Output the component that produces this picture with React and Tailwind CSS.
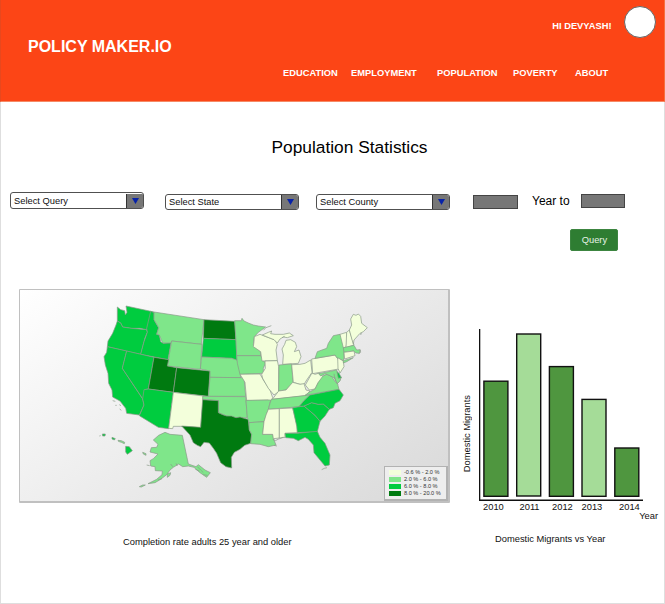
import React from "react";

const GREENS = { cream: "#f3ffdb", light: "#7fe68a", mid: "#00cc3f", dark: "#007a10" };

// Each region lists polygons drawn relative to its own origin.
const REGIONS = [
  {
    origin: "translate(0 0)",
    states: [
      ["mid", "82 36 92 44 104 47 106 60 111 52 108 33 192 51 181 72 170 104 150 100 124 100 98 96 92 84 82 78"],
      ["mid", "82 78 92 84 98 96 124 100 170 104 172 112 165 128 152 178 104 167 52 155 54 138 68 115 78 90"],
      ["mid", "182 49 192 53 192 74 206 98 200 118 208 120 212 140 220 145 243 143 234 194 152 178 162 140 172 112 170 100"],
      ["light", "192 51 342 74 334 148 245 138 243 144 218 144 208 120 200 118 206 98 192 74"],
      ["light", "245 138 336 148 331 223 232 213"],
      ["mid", "52 155 110 168 97 220 158 312 162 330 148 360 110 355 107 340 90 318 68 306 66 285 56 265 54 235 46 210 42 185 50 172"],
      ["mid", "110 168 192 187 175 282 165 284 160 314 97 220"],
      ["dark", "192 187 236 194 232 213 260 218 250 292 175 282"],
      ["dark", "260 218 360 228 355 304 250 292"],
      ["mid", "175 282 250 292 236 401 205 397 148 362 162 330 158 312 162 284"],
      ["cream", "250 292 340 303 332 398 272 394 250 394 248 401 236 400"],
      ["dark", "342 74 434 79 438 134 340 130"],
      ["mid", "340 130 438 134 441 197 425 190 335 186"],
      ["light", "335 186 425 190 441 195 450 222 452 248 360 247 360 228 331 222"],
      ["light", "360 247 462 248 467 304 355 304"],
    ],
  },
  {
    origin: "translate(330 0)",
    states: [
      ["light", "104 77 124 77 126 70 132 78 145 84 160 90 175 93 197 96 175 112 163 125 160 150 182 170 182 182 110 182 108 140"],
      ["light", "110 182 182 182 196 205 190 220 190 235 120 238 112 205"],
      ["cream", "120 238 180 237 190 255 210 285 218 308 210 325 205 315 140 317 135 262"],
      ["cream", "163 125 180 118 195 124 225 135 232 148 228 165 232 197 186 198 182 170 160 155 162 140"],
      ["cream", "187 120 205 112 215 108 212 116 225 118 250 118 268 114 280 122 262 128 250 126 240 132 232 144 222 134"],
      ["cream", "248 208 250 180 246 162 254 148 258 136 272 134 286 142 290 155 283 170 297 165 303 185 295 205"],
      ["cream", "195 198 232 197 236 215 236 270 236 290 222 300 205 280 188 250 185 238 196 220"],
      ["light", "237 210 275 207 279 262 258 285 236 288"],
      ["cream", "275 209 300 208 315 205 332 195 336 232 320 255 312 268 300 268 280 262"],
      ["cream", "217 313 236 288 258 285 278 262 300 268 312 266 318 285 330 288 318 302"],
      ["cream", "336 234 345 238 358 234 368 244 380 238 362 256 355 262 345 282 328 285 316 270"],
      ["cream", "335 192 405 180 416 195 416 222 338 236"],
      ["light", "345 190 352 170 380 160 385 145 400 122 420 118 428 135 432 160 432 185 430 197 412 190 405 180"],
      ["cream", "413 188 430 198 432 215 420 234 414 220"],
      ["cream", "420 118 440 112 442 130 438 158 430 158"],
      ["cream", "440 112 448 105 462 150 438 158"],
      ["cream", "448 105 455 90 452 72 460 58 468 61 475 57 482 64 485 85 502 98 490 110 480 115 462 135 460 148"],
      ["light", "430 158 462 151 470 165 480 164 478 175 468 174 460 168 432 172"],
      ["cream", "432 172 462 168 465 182 434 192"],
      ["light", "430 197 460 188 440 200 430 204"],
      ["light", "380 238 395 244 404 258 413 268 417 283 315 301 330 290 345 282 355 262 368 244"],
      ["light", "356 236 410 225 416 248 424 246 420 258 412 266 402 248 385 240 376 236 362 243"],
      ["mid", "411 230 417 235 424 248 415 250"],
    ],
  },
  {
    origin: "translate(330 255)",
    states: [
      ["light", "8 49 137 50 142 112 132 114 120 112 108 113 80 108 55 98 55 62 8 58"],
      ["dark", "8 59 55 62 55 98 68 104 80 108 94 108 108 113 120 111 132 115 145 118 148 150 155 163 152 190 134 196 120 208 103 217 94 232 95 264 78 260 62 248 50 220 40 205 28 189 12 187 2 200 -8 196 -20 188 -30 165 -55 138 2 142"],
      ["light", "138 61 212 60 205 88 192 125 147 128 142 112"],
      ["light", "147 128 192 125 188 163 218 163 222 180 228 195 205 200 180 193 152 191 155 163 148 150"],
      ["light", "214 58 330 45 312 62 297 80 205 88 210 70"],
      ["cream", "205 88 238 86 238 174 220 176 218 163 188 163 192 125 198 105"],
      ["cream", "238 86 278 84 292 140 292 158 255 160 255 172 238 174"],
      ["mid", "278 83 312 78 345 106 360 124 352 155 292 158 290 138"],
      ["mid", "312 78 335 68 355 73 370 72 388 88 375 108 360 124 345 106"],
      ["mid", "297 80 312 62 330 45 417 28 430 45 420 62 405 70 400 83 388 88 370 72 355 73 335 68 312 78"],
      ["mid", "255 160 292 160 352 154 360 172 375 190 390 225 388 255 375 258 360 240 342 218 340 195 325 178 315 172 295 182 280 175 257 173"],
    ],
  },
  {
    origin: "translate(0 375)",
    states: [
      ["light", "190 60 206 46 225 37 240 43 277 46 295 132 318 140 325 134 345 150 361 158 350 172 330 158 312 142 295 138 278 140 266 132 250 142 240 150 230 164 212 178 195 188 174 191 200 178 216 164 217 153 196 152 195 140 182 138 180 122 190 116 204 102 180 96 184 83 200 82 204 73"],
      ["light", "232 162 242 158 240 166 232 172"],
      ["light", "148 200 158 195 166 195 154 201"],
      ["light", "158 97 168 101 168 106 160 102"],
      ["mid", "107 79 118 80 127 92 112 103 107 96"],
      ["mid", "37 42 46 42 45 48 38 48"],
      ["mid", "66 52 76 56 73 60 66 57"],
      ["light", "84 61 94 62 104 67 103 71 94 67 85 64"],
    ],
  },
];

const LEGEND = [
  ["bg-[#f3ffdb]", "-0.6 % - 2.0 %"],
  ["bg-[#7fe68a]", "2.0 % - 6.0 %"],
  ["bg-[#00cc3f]", "6.0 % - 8.0 %"],
  ["bg-[#007a10]", "8.0 % - 20.0 %"],
];

function StateMap() {
  return (
    <svg className="block h-[211px] w-[428px]" viewBox="-210 -15 1284 633">
      <g stroke="#8a9a88" strokeOpacity="0.8" strokeWidth="2.6" strokeLinejoin="round">
        {REGIONS.map((r) => (
          <g key={r.origin} transform={r.origin}>
            {r.states.map(([tone, pts]) => (
              <polygon key={pts} points={pts} fill={GREENS[tone]} />
            ))}
          </g>
        ))}
        <g fill="none">
          <path transform="translate(330 0)" d="M190 106l8-8 16-6 M246 128l8-4" />
          <path transform="translate(330 255)" d="M218 178l8 4 10-5 6-2 8-4 M222 196l9 2 M365 269l8-4 8-2" />
          <path transform="translate(330 0)" d="M404 246l4 14 6 8 M402 236l2 12 M480 118l6-2 M476 176l6-4-1-8" />
          <path d="M68 317l8 2 M76 331h4 M88 329l5 3 M89 342l5 4" />
          <path transform="translate(0 375)" d="M28 48l4-1 M170 135l9 2 M242 132l6 8 M258 130l4 8 M316 148l12 5 M322 140l10 10 M332 150l8 8 M340 164l12 2 M204 180l12-4" />
        </g>
      </g>
    </svg>
  );
}

function Select({ label, className }) {
  return (
    <div className={`flex w-[134px] overflow-hidden rounded-[3px] border border-[#505050] bg-white ${className}`}>
      <span className="flex-1 pl-[3px] leading-[15px]">{label}</span>
      <span className="flex w-[17px] items-center justify-center border-l border-[#333] bg-[#777]">
        <svg className="h-[6px] w-[7px]" viewBox="0 0 7 6">
          <path d="M0 0h7L3.5 6z" fill="#0722a8" />
        </svg>
      </span>
    </div>
  );
}

const BARS = [
  { year: "2010", x: 4.9, y: 52.2, h: 115.1, fill: "#4f963f" },
  { year: "2011", x: 37.7, y: 5, h: 162, fill: "#a5dc98" },
  { year: "2012", x: 70.4, y: 37.6, h: 129.7, fill: "#4f963f" },
  { year: "2013", x: 103, y: 70.4, h: 96.9, fill: "#a5dc98" },
  { year: "2014", x: 135.8, y: 119, h: 48.3, fill: "#4f963f" },
];

function BarChart() {
  return (
    <div className="mt-[40px] w-[197px]">
      <div className="flex">
        <div className="flex h-[172px] w-[17px] items-center justify-start pt-[37px]">
          <span className="rotate-180 whitespace-nowrap leading-[11px] [writing-mode:vertical-rl]">Domestic Migrants</span>
        </div>
        <svg className="block h-[172px] w-[168px]" viewBox="0 0 168 172">
          <g stroke="#111" strokeWidth="1.4">
            <path d="M0.6 0V171.3H164" fill="none" />
            {BARS.map((b) => (
              <rect key={b.year} x={b.x} y={b.y} width="24" height={b.h} fill={b.fill} />
            ))}
          </g>
        </svg>
      </div>
      <div className="mt-px flex pl-[21px] leading-[11px]">
        <span className="w-[36.5px]">2010</span>
        <span className="w-[32.5px]">2011</span>
        <span className="w-[29.5px]">2012</span>
        <span className="w-[37.5px]">2013</span>
        <span>2014</span>
      </div>
      <div className="mt-[-2px] pr-px text-right leading-[11px]">Year</div>
      <div className="mt-3 pl-[33px] leading-[11px]">Domestic Migrants vs Year</div>
    </div>
  );
}

export default function App() {
  return (
    <div className="h-[604px] w-[665px] bg-white font-['Liberation_Sans',Arial,sans-serif] text-[9.33px] text-[#111]">
      <header className="h-[102px] border border-t-0 border-b-[#f58a66] border-l-[#e8481e] border-r-[#f5703f] bg-[#fc4516] font-bold text-white">
        <div className="flex h-[37px] justify-end pr-[8px]">
          <span className="mt-[20px] leading-[12px]">HI DEVYASH!</span>
          <div className="ml-[12.5px] mt-[6px] h-8 w-8 rounded-full border border-[#666] bg-white" />
        </div>
        <h1 className="pl-[27px] text-base leading-[19px]">POLICY MAKER.IO</h1>
        <nav className="mt-[11px] flex pl-[282px] leading-[12px]">
          <a className="w-[68px]">EDUCATION</a>
          <a className="w-[86px]">EMPLOYMENT</a>
          <a className="w-[76px]">POPULATION</a>
          <a className="w-[62px]">POVERTY</a>
          <a>ABOUT</a>
        </nav>
      </header>

      <div className="h-[502px] border border-t-0 border-[#dedede]">
        <h2 className="pl-[270.5px] pt-[35px] text-[17.33px] leading-[20px] text-black">Population Statistics</h2>

        <div className="mt-[35px] flex h-[37px] items-start pl-[9px]">
          <Select label="Select Query" className="h-[17px] pt-px" />
          <Select label="Select State" className="ml-[21px] mt-[2px] h-4" />
          <Select label="Select County" className="ml-[17px] mt-[2px] h-4" />
          <div className="ml-[23px] mt-[3px] h-[14px] w-[44.5px] border border-[#444] bg-[#777]" />
          <span className="ml-[14.5px] mt-[2px] text-xs leading-[15px] text-black">Year to</span>
          <div className="ml-[11px] mt-[2px] h-[13.5px] w-[44.5px] border border-[#444] bg-[#777]" />
        </div>

        <div className="flex h-[60px] pl-[569.4px]">
          <button className="h-[22px] w-[48px] rounded-[2px] border border-[#3c8540] bg-[#2e7d32] pt-px text-[#e6f2e6]">Query</button>
        </div>

        <main className="flex pl-[18px]">
          <section className="w-[431px]">
            <div className="relative h-[214px] w-[431px] rounded-[1px] border-[1.5px] border-b-2 border-r-2 border-[#c0c0c0] bg-linear-[145deg,#ffffff_0%,#efefef_42%,#d9d9d9_100%]">
              <StateMap />
              <div className="absolute bottom-0 right-0 h-[35px] w-[64px] border border-b-2 border-r-2 border-[#b2b2b2] bg-[#eeeeee] pl-[4px] pt-[2px]">
                {LEGEND.map(([tone, range]) => (
                  <div key={range} className="flex h-[7px] items-center gap-[3px]">
                    <i className={`h-[5px] w-[12px] shrink-0 ${tone}`} />
                    <span className="whitespace-nowrap text-[5.6px] leading-[7px] text-[#333]">{range}</span>
                  </div>
                ))}
              </div>
            </div>
            <p className="mt-[34px] pl-[104px] leading-[11px]">Completion rate adults 25 year and older</p>
          </section>
          <div className="ml-[12px]">
            <BarChart />
          </div>
        </main>
      </div>
    </div>
  );
}
